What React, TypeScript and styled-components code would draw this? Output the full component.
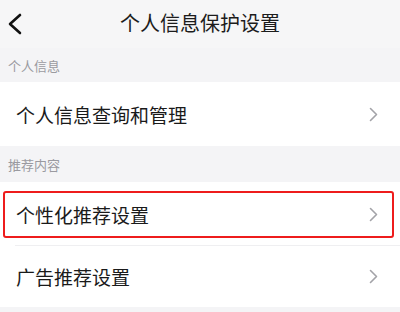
import React from 'react'
import styled, { createGlobalStyle } from 'styled-components'

const GlobalStyle = createGlobalStyle`
  html, body {
    margin: 0;
    padding: 0;
    background: #f4f4f6;
    font-family: "Noto Sans CJK SC", "Noto Sans", sans-serif;
  }
`

const Page = styled.div`
  width: 400px;
  height: 312px;
  overflow: hidden;
  background: #f4f4f6;
  display: flex;
  flex-direction: column;
`

const Header = styled.div`
  height: 48px;
  flex-shrink: 0;
  display: grid;
  grid-template-columns: 40px 1fr 40px;
  align-items: center;
  background: #f6f6f7;
`

const BackButton = styled.div`
  display: flex;
  align-items: center;
  padding-left: 7px;
  height: 100%;
`

const Title = styled.div`
  text-align: center;
  font-size: 20px;
  color: #1c1c1c;
  line-height: 1;
  margin-top: -2px;
`

const SectionLabel = styled.div<{ $h: number }>`
  height: ${p => p.$h}px;
  flex-shrink: 0;
  display: flex;
  align-items: center;
  padding-left: 8px;
  font-size: 13px;
  color: #9a9aa0;
`

const Group = styled.div`
  background: #fff;
  display: flex;
  flex-direction: column;
`

const Row = styled.div<{ $h: number; $divider?: boolean }>`
  position: relative;
  height: ${p => p.$h}px;
  display: flex;
  align-items: center;
  justify-content: space-between;
  padding: 0 22px 0 16px;
  font-size: 19px;
  color: #1a1a1a;
  ${p => p.$divider && `
    &::after {
      content: '';
      position: absolute;
      left: 15px;
      right: 0;
      bottom: 0;
      height: 1px;
      background: #efeff1;
    }
  `}
`

const Label = styled.span`
  line-height: 1;
`

const Highlight = styled.div`
  position: absolute;
  top: 9px;
  left: 3px;
  right: 6px;
  bottom: 8px;
  border: 2px solid #ee1c1c;
  border-radius: 3px;
  pointer-events: none;
`

const Chevron = () => (
  <svg width="9" height="15" viewBox="0 0 9 15">
    <polyline points="1.5,1.5 7.5,7.5 1.5,13.5" fill="none" stroke="#a3a3a8" strokeWidth="1.6" strokeLinecap="round" strokeLinejoin="round" />
  </svg>
)

export default function App() {
  return (
    <Page>
      <GlobalStyle />
      <Header>
        <BackButton>
          <svg width="16" height="22" viewBox="0 0 16 22">
            <polyline points="13,2 3,11 13,20" fill="none" stroke="#111" strokeWidth="2.6" strokeLinecap="round" strokeLinejoin="round" />
          </svg>
        </BackButton>
        <Title>个人信息保护设置</Title>
        <div />
      </Header>

      <SectionLabel $h={34}>个人信息</SectionLabel>
      <Group>
        <Row $h={64}>
          <Label>个人信息查询和管理</Label>
          <Chevron />
        </Row>
      </Group>

      <SectionLabel $h={36}>推荐内容</SectionLabel>
      <Group>
        <Row $h={64} $divider>
          <Label>个性化推荐设置</Label>
          <Chevron />
          <Highlight />
        </Row>
        <Row $h={61}>
          <Label>广告推荐设置</Label>
          <Chevron />
        </Row>
      </Group>
    </Page>
  )
}
